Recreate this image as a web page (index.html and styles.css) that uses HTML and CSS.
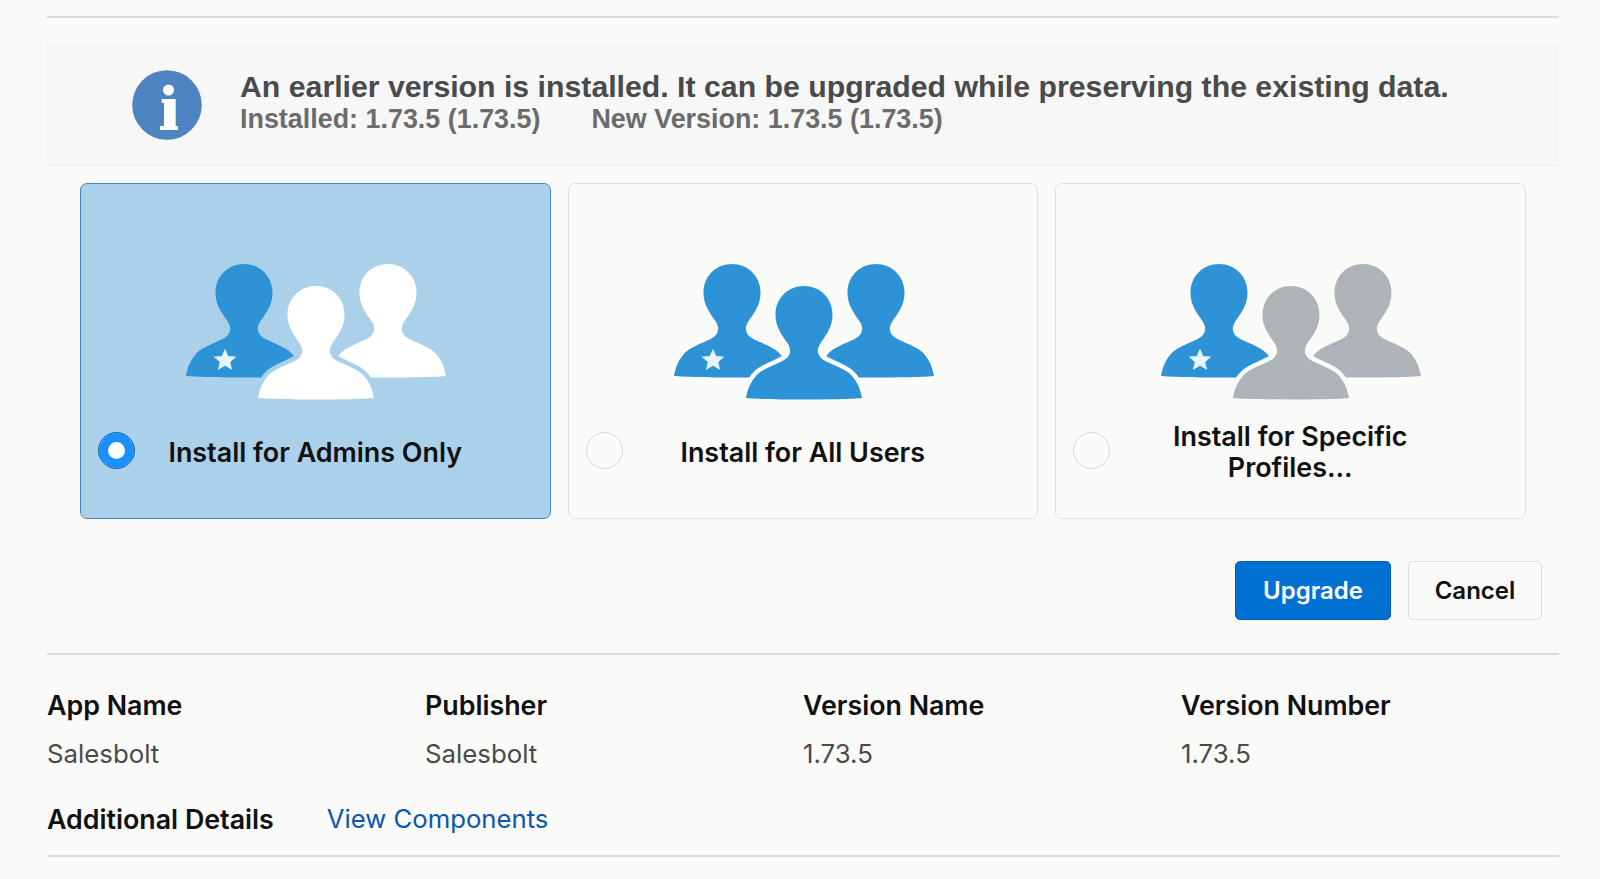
FILE: index.html
```html
<!DOCTYPE html>
<html lang="en">
<head>
<meta charset="utf-8">
<title>Upgrade Salesbolt</title>
<link rel="stylesheet" href="styles.css">
</head>
<body>
<svg class="defs" width="0" height="0" aria-hidden="true">
  <defs>
    <path id="person" d="M0 0C16 0 28.5 12 28.5 29C28.5 42 21 50 16 58C13 63 13 68 17 72C22 77 36 80 45 87C52 93 56 101 58 112C40 114 -40 114 -58 112C-56 101 -52 93 -45 87C-36 80 -22 77 -17 72C-13 68 -13 63 -16 58C-21 50 -28.5 42 -28.5 29C-28.5 12 -16 0 0 0Z"/>
    <polygon id="star" points="0,-10.5 3,-3.6 10.5,-3 4.8,1.9 6.5,9.2 0,5.3 -6.5,9.2 -4.8,1.9 -10.5,-3 -3,-3.6"/>
  </defs>
</svg>
<main class="page">
  <hr class="rule rule-top">
  <section class="banner">
    <svg class="info-icon" viewBox="0 0 70 70" width="70" height="70" aria-hidden="true">
      <circle cx="35" cy="35" r="34.8" fill="#4f84c2"/>
      <circle cx="36.5" cy="20" r="5.5" fill="#fff"/>
      <path d="M29.7 29H43.7V56H46V60H28V56H32V33H29.7Z" fill="#fff"/>
    </svg>
    <div class="banner-text">
      <p class="banner-title">An earlier version is installed. It can be upgraded while preserving the existing data.</p>
      <p class="banner-sub"><span>Installed: 1.73.5 (1.73.5)</span><span>New Version: 1.73.5 (1.73.5)</span></p>
    </div>
  </section>
  <section class="cards">
    <div class="card card-selected">
      <svg class="people people-white" viewBox="0 0 262 138" width="262" height="138" aria-hidden="true">
        <use href="#person" class="admin" x="60" y="1"/>
        <use href="#star" class="star" x="41" y="97"/>
        <use href="#person" class="other" x="204" y="1"/>
        <use href="#person" class="front" x="132" y="23"/>
      </svg>
      <div class="choice">
        <span class="radio radio-on"></span>
        <span class="choice-label">Install for Admins Only</span>
      </div>
    </div>
    <div class="card">
      <svg class="people people-blue" viewBox="0 0 262 138" width="262" height="138" aria-hidden="true">
        <use href="#person" class="admin" x="60" y="1"/>
        <use href="#star" class="star" x="41" y="97"/>
        <use href="#person" class="other" x="204" y="1"/>
        <use href="#person" class="front" x="132" y="23"/>
      </svg>
      <div class="choice">
        <span class="radio"></span>
        <span class="choice-label">Install for All Users</span>
      </div>
    </div>
    <div class="card">
      <svg class="people people-grey" viewBox="0 0 262 138" width="262" height="138" aria-hidden="true">
        <use href="#person" class="admin" x="60" y="1"/>
        <use href="#star" class="star" x="41" y="97"/>
        <use href="#person" class="other" x="204" y="1"/>
        <use href="#person" class="front" x="132" y="23"/>
      </svg>
      <div class="choice">
        <span class="radio"></span>
        <span class="choice-label">Install for Specific Profiles...</span>
      </div>
    </div>
  </section>
  <div class="actions">
    <button class="btn btn-primary" type="button">Upgrade</button>
    <button class="btn btn-neutral" type="button">Cancel</button>
  </div>
  <hr class="rule">
  <section class="details">
    <div class="detail"><h3>App Name</h3><p>Salesbolt</p></div>
    <div class="detail"><h3>Publisher</h3><p>Salesbolt</p></div>
    <div class="detail"><h3>Version Name</h3><p>1.73.5</p></div>
    <div class="detail"><h3>Version Number</h3><p>1.73.5</p></div>
  </section>
  <div class="additional">
    <h3>Additional Details</h3>
    <a href="#">View Components</a>
  </div>
  <hr class="rule">
</main>
</body>
</html>
```
FILE: styles.css
```css
* { box-sizing: border-box; }
html, body { margin: 0; height: 100%; }
body {
  background: #fafaf9;
  font-family: Inter, "Liberation Sans", sans-serif;
  overflow: hidden;
}
.defs { display: block; height: 0; }
.page { padding: 16px 41px 0 47px; }
.rule { border: 0; height: 2px; margin: 0; background: #dcdcdb; }
.rule-top { margin-bottom: 26px; }

.banner {
  height: 122px;
  display: flex;
  align-items: center;
  padding-left: 84.5px;
  background: #f7f7f8;
  border-top: 1px solid #f0f0f1;
  border-bottom: 1px solid #eeeef0;
  font-family: "Liberation Sans", Arial, sans-serif;
  font-weight: 700;
}
.info-icon { flex: none; margin-right: 38.5px; }
.banner-text { padding-bottom: 6px; }
.banner-text p { margin: 0; white-space: nowrap; }
.banner-title { font-size: 30.25px; line-height: 34px; color: #4a4a4a; }
.banner-sub { font-size: 26.9px; line-height: 30px; margin-top: 2px; color: #6b6b6b; display: flex; gap: 51px; }

.cards {
  display: grid;
  grid-template-columns: repeat(3, 470.5px);
  column-gap: 17px;
  margin: 17px 0 0 33px;
}
.card {
  height: 336px;
  border: 1px solid #dfe2e6;
  border-radius: 7px;
  padding-top: 79px;
  display: flex;
  flex-direction: column;
}
.card-selected { background: #abd0ea; border-color: #4a86b8; }
.people { display: block; align-self: center; overflow: visible; flex: none; }
.people .admin { fill: #2d93d6; }
.people .star { fill: #e8f4fc; stroke: #e8f4fc; stroke-width: 0.8px; stroke-linejoin: round; }
.people-white .other, .people-white .front { fill: #fff; }
.people-blue .other, .people-blue .front { fill: #2d93d6; }
.people-grey .other, .people-grey .front { fill: #aeb3b7; }
.people .front { stroke: #fafaf9; stroke-width: 9px; paint-order: stroke; stroke-linejoin: round; }
.people-white .front { stroke: #abd0ea; }

.choice {
  display: grid;
  grid-template-columns: 37px 1fr 37px;
  grid-template-rows: 62px;
  align-items: center;
  margin-top: 18px;
  padding: 0 17px;
}
.choice-label {
  justify-self: center;
  max-width: 300px;
  margin-top: 4px;
  text-align: center;
  font-size: 26.9px;
  line-height: 31px;
  font-weight: 600;
  color: #111;
}
.radio {
  width: 37px;
  height: 37px;
  border-radius: 50%;
  border: 1px solid #d6d6d6;
  background: #fafaf9;
}
.radio-on {
  border: 1px solid #0b5cab;
  background: #fff;
  box-shadow: inset 0 0 0 9px #1a90ff;
}

.actions {
  display: flex;
  justify-content: flex-end;
  gap: 17px;
  margin-top: 42px;
  padding-right: 17px;
}
.btn {
  height: 59px;
  border-radius: 5px;
  font-family: Inter, "Liberation Sans", sans-serif;
  font-size: 24px;
  font-weight: 600;
  padding: 0;
}
.btn-primary { width: 156px; background: #0170d3; border: 1px solid #0160b5; color: #fff; }
.btn-neutral { width: 134px; background: #f9f9fa; border: 1px solid #dcdcdc; color: #111; }

.actions + .rule { margin-top: 33px; }

.details {
  display: grid;
  grid-template-columns: repeat(4, 378px);
  margin-top: 32px;
}
h3 { margin: 0; font-size: 26.8px; line-height: 36px; font-weight: 600; color: #111; }
.detail p { margin: 13px 0 0; font-size: 25.8px; line-height: 36px; font-weight: 400; color: #4a4a4a; }
.additional { display: flex; align-items: center; gap: 53px; margin-top: 29px; }
.additional a { font-size: 25.7px; line-height: 36px; color: #0b57ad; text-decoration: none; }
.additional + .rule { margin-top: 18px; }
```
